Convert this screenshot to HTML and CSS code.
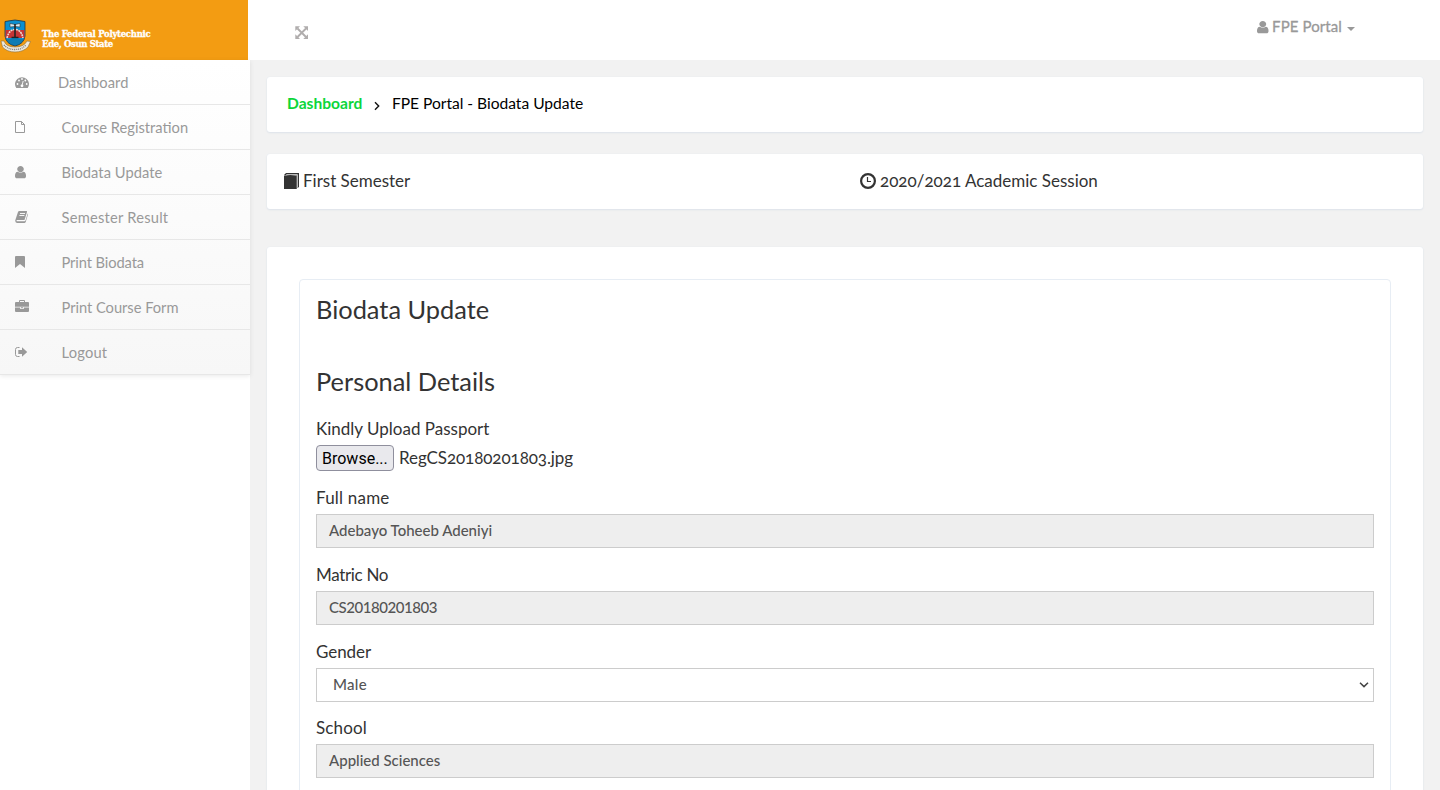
FILE: index.html
```html
<!DOCTYPE html>
<html lang="en">
<head>
<meta charset="utf-8">
<title>FPE Portal - Biodata Update</title>
<link rel="stylesheet" href="styles.css">
</head>
<body>
<div class="layout">
  <aside class="sidebar">
    <a class="brand">
      <svg class="crest" width="32" height="34" viewBox="0 0 32 34">
        <path d="M5 2.500 Q15 -.5 25 2.500 V17 Q24 25 15 27 Q6 25 5 17Z" fill="#0b8fd0" stroke="#26333c" stroke-width=".8"/>
        <path d="M5.500 11 H24.500 V19 H5.500Z" fill="#c73535"/>
        <path d="M7 19 Q9 10.500 15 10.500 Q21 10.500 23 19" fill="none" stroke="#eddcd2" stroke-width="1.600" stroke-dasharray="2 .7"/>
        <path d="M10 4.500 L15 5.500 L20 4.500 V8 L15 7.500 L10 8Z" fill="#dcecf2" stroke="#333" stroke-width=".6"/>
        <path d="M15 5 V19 M11.500 18.500 H18.500" stroke="#222" stroke-width="1.600"/>
        <path d="M7 21 H23 M8 23 H22 M10 25 H20" stroke="#126792" stroke-width=".9"/>
        <path d="M1 22 L4 22 Q6 28 15 28 Q24 28 27 22 L30.500 22.500 L28 28 Q23 33 15 33 Q7 33 2.500 28Z" fill="#eee9dc" stroke="#8b713f" stroke-width=".6"/>
        <path d="M4 26 Q8 30.500 15 30.500 Q22 30.500 26 26" fill="none" stroke="#777" stroke-width="1.300" stroke-dasharray="1 .9"/>
      </svg>
      <span class="brand-name"><span class="b1">The Federal Polytechnic</span><br><span class="b2">Ede, Osun State</span></span>
    </a>
    <nav class="menu">
      <a class="item first"><svg width="16" height="14" viewBox="0 0 16 14"><path d="M1.300 13 A7 6.800 0 1 1 12.700 13Z" fill="currentColor"/><g fill="#fff"><circle cx="2.500" cy="9" r=".9"/><circle cx="4" cy="5.500" r=".9"/><circle cx="7" cy="4" r=".9"/><circle cx="10.300" cy="5.500" r=".9"/><circle cx="11.700" cy="9" r=".9"/><circle cx="7" cy="10.800" r="1.400"/></g><path d="M7 10.500 L8.200 6" stroke="#fff" stroke-width=".9"/></svg><span class="m1">Dashboard</span></a>
      <a class="item"><svg width="16" height="14" viewBox="0 0 16 14"><path d="M.5 1.500 H6.500 L9.500 4.500 V12.500 H.5Z M6.500 1.500 V4.500 H9.500" fill="none" stroke="currentColor"/></svg><span class="m2">Course Registration</span></a>
      <a class="item"><svg width="16" height="14" viewBox="0 0 16 14"><path fill="currentColor" transform="scale(.0086 .0080)" d="M1280 1399q0 109-62.500 187t-150.500 78h-854q-88 0-150.500-78t-62.500-187q0-85 8.500-160.500t31.500-152 58.500-131 94-89 134.500-34.500q131 128 313 128t313-128q76 0 134.500 34.500t94 89 58.500 131 31.500 152 8.500 160.500zm-256-887q0 159-112.500 271.500t-271.500 112.500-271.500-112.500-112.500-271.500 112.500-271.500 271.500-112.500 271.500 112.500 112.500 271.500z"/></svg><span class="m3">Biodata Update</span></a>
      <a class="item"><svg width="16" height="14" viewBox="0 0 16 14"><path d="M4.300 1 H11.500 Q12.300 1.200 12 2 L9.500 10 H2 Q1 10.300 1.700 11.200 H9.500 Q10.300 11.200 10.600 10.300 L12.700 3.500 Q13.200 4 12.900 4.700 L10.800 11.800 Q10.300 13 9.300 13 H2 Q.2 12.500 .2 10.500 L2.900 2.200 Q3.300 1 4.300 1Z" fill="currentColor"/><path d="M5 3.500 H10 M4.400 5.500 H9.400" stroke="#fff" stroke-width=".9"/></svg><span class="m4">Semester Result</span></a>
      <a class="item"><svg width="16" height="14" viewBox="0 0 16 14"><path d="M1 1 H9 Q10 1 10 2 V13 L5 9 L0 13 V2 Q0 1 1 1Z" fill="currentColor"/></svg><span class="m5">Print Biodata</span></a>
      <a class="item"><svg width="16" height="14" viewBox="0 0 16 14"><path d="M4.500 2.500 V.5 H9.500 V2.500" fill="none" stroke="currentColor"/><path d="M1 2 H13 Q14 2 14 3 V6.700 H0 V3 Q0 2 1 2Z M0 7.500 H5.200 V9 H8.800 V7.500 H14 V11 Q14 12 13 12 H1 Q0 12 0 11Z M6 7.300 H8 V8.300 H6Z" fill="currentColor"/></svg><span class="m6">Print Course Form</span></a>
      <a class="item"><svg width="16" height="14" viewBox="0 0 16 14"><path d="M4.500 2.500 H2.500 Q.5 2.500 .5 4.500 V9.500 Q.5 11.500 2.500 11.500 H4.500" fill="none" stroke="currentColor"/><path d="M3.300 5 H7 V2.300 L12.200 7 L7 11.700 V9 H3.300Z" fill="currentColor"/></svg><span class="m7">Logout</span></a>
    </nav>
  </aside>
  <div class="content">
    <header class="topbar">
      <svg class="expand" width="14" height="14" viewBox="0 0 14 14"><path d="M2.500 2.500 L11 11 M11 2.500 L2.500 11" stroke="currentColor" stroke-width="1.900"/><path d="M.3 .3 H5 L.3 5Z M13 .3 V5 L8.300 .3Z M.3 13 V8.300 L5 13Z M13 13 H8.300 L13 8.300Z" fill="currentColor"/></svg>
      <a class="account"><svg width="12" height="14" viewBox="0 0 12 14"><path fill="currentColor" transform="scale(.0090 .0080)" d="M1280 1399q0 109-62.500 187t-150.500 78h-854q-88 0-150.500-78t-62.500-187q0-85 8.500-160.500t31.500-152 58.500-131 94-89 134.500-34.500q131 128 313 128t313-128q76 0 134.500 34.500t94 89 58.500 131 31.500 152 8.500 160.500zm-256-887q0 159-112.500 271.500t-271.500 112.500-271.500-112.500-112.500-271.500 112.500-271.500 271.500-112.500 271.500 112.500 112.500 271.500z"/></svg><span class="account-name">FPE Portal</span><i class="caret"></i></a>
    </header>
    <main class="page">
      <section class="card crumbs">
        <a class="c1">Dashboard</a>
        <svg width="6" height="10" viewBox="0 0 6 10"><path d="M1 1.200 L4.700 5 L1 8.800" fill="none" stroke="#111" stroke-width="1.400"/></svg>
        <span class="c2">FPE Portal - Biodata Update</span>
      </section>
      <section class="card term">
        <div class="half"><svg width="16" height="16" viewBox="0 0 16 16"><path d="M0 2 L2 0 H15 V14 L13.500 15 V2.500 H1 V16 H12.500 V3" fill="#333"/><path d="M1 3 H12.500 V16 H0 V2Z" fill="#333"/><path d="M2 2 L3 1.500 H13.500 V14" fill="none" stroke="#bbb" stroke-width="1"/></svg><span class="s1">First Semester</span></div>
        <div class="half"><svg class="clock" width="16" height="16" viewBox="0 0 16 16"><circle cx="8" cy="8" r="6.900" fill="none" stroke="#333" stroke-width="2.200"/><path d="M7.500 4 V8.500 H11" fill="none" stroke="#333" stroke-width="1.200"/></svg><span class="s2">2020/2021 Academic Session</span></div>
      </section>
      <section class="card form-card">
        <form class="panel">
          <h3>Biodata Update</h3>
          <h3 class="second">Personal Details</h3>
          <div class="group upload">
            <label>Kindly Upload Passport</label>
            <div class="file"><span class="browse">Browse...</span><span class="filename">RegCS20180201803.jpg</span></div>
          </div>
          <div class="group"><label class="l2">Full name</label><div class="control"><span class="v1">Adebayo Toheeb Adeniyi</span></div></div>
          <div class="group"><label class="l3">Matric No</label><div class="control"><span class="v2">CS20180201803</span></div></div>
          <div class="group"><label class="l4">Gender</label><div class="control select"><span class="v3">Male</span><svg width="10" height="6" viewBox="0 0 10 6"><path d="M1 .8 L5 4.600 L9 .8" fill="none" stroke="#444" stroke-width="1.500"/></svg></div></div>
          <div class="group"><label class="l5">School</label><div class="control"><span class="v4">Applied Sciences</span></div></div>
        </form>
      </section>
    </main>
  </div>
</div>
</body>
</html>
```
FILE: styles.css
```css
* { box-sizing: border-box; }
body { margin: 0; background: #f2f2f2; color: #333; font: 17px/24px Lato, "Open Sans", sans-serif; }
span { white-space: nowrap; }
.layout { display: flex; height: 790px; overflow: hidden; }
.sidebar { width: 250px; flex: none; background: #fff; }
.brand { display: flex; align-items: flex-start; width: 248px; height: 60px; padding-top: 19px; background: #f39c12; color: #fff; }
.crest { flex: none; margin-left: -.5px; }
.brand-name { margin: 10px 0 0 10.5px; font: 900 8.5px/10px "DejaVu Serif", serif; -webkit-text-stroke: .3px #fff; }
.b1 { letter-spacing: -.27px; }
.b2 { letter-spacing: -.35px; }
.menu { color: #999; background: linear-gradient(#fff, #f7f7f7); box-shadow: 0 1px 5px rgba(0,0,0,.09); font-size: 14.7px; }
.item { display: flex; align-items: center; height: 45px; padding-left: 15px; border-bottom: 1px solid #e7e7e7; }
.item svg { flex: none; margin-right: 30.5px; }
.item.first svg { margin-right: 27px; }
.m1, .m3 { letter-spacing: .05px; }
.m4 { letter-spacing: .23px; }
.m5 { letter-spacing: -.1px; }
.m6 { letter-spacing: -.03px; }
.m7 { letter-spacing: .2px; }
.content { flex: 1; min-width: 0; }
.topbar { display: flex; justify-content: space-between; height: 60px; padding: 26px 85px 0 45px; background: #fff; color: #999; }
.expand { color: #b0adad; }
.account { display: flex; align-items: center; height: 14px; margin-top: -6px; font-size: 15px; -webkit-text-stroke: .3px #999; }
.account svg { margin-right: 3px; }
.account-name { padding-bottom: 2px; letter-spacing: .1px; }
.caret { margin: 4px 0 0 5px; border: 4px solid transparent; border-top-color: #999; border-bottom: 0; }
.page { padding: 17px 17px 0; }
.card { background: #fff; border-radius: 3px; box-shadow: 0 0 1px #dbe4ef, 0 1px 2px #dde2e8; }
.crumbs { display: flex; align-items: center; height: 55px; padding: 0 20px 4px; color: #000; font-size: 15.6px; }
.crumbs a { color: #0cd63b; font-weight: 700; }
.crumbs svg { margin: 6px 12px 0 11.5px; }
.c2 { letter-spacing: -.02px; }
.term { display: flex; height: 55px; margin-top: 22px; }
.half { display: flex; align-items: center; width: 576px; padding: 0 0 2px 17px; }
.half svg { margin: 0 3px 0 0; }
.half .clock { margin-right: 4px; }
.s2, .filename { font-feature-settings: "onum"; }
.form-card { margin-top: 38px; padding: 32px; height: 700px; }
.panel { height: 700px; padding: 15px 16px; border: 1px solid #e7edf4; border-radius: 4px; }
h3 { margin: 0; font-size: 25.4px; line-height: 28px; font-weight: 400; }
.second { margin-top: 44px; }
.upload { margin-top: 22px; height: 69px; }
label { display: block; height: 28px; line-height: 24px; }
.l2 { letter-spacing: .2px; }
.l3 { letter-spacing: -.33px; }
.l4 { letter-spacing: -.08px; }
.l5 { letter-spacing: .16px; }
.l3, .l4 { line-height: 23px; }
.file { display: flex; align-items: center; height: 26px; }
.browse { display: flex; align-items: center; width: 78px; height: 26px; margin-right: 5px; padding: 1px 0 0 5px; border: 1px solid #8f8f9d; border-radius: 4px; background: #e9e9ed; color: #000; font-family: Roboto, sans-serif; font-size: 16px; }
.filename { letter-spacing: -.09px; }
.group + .group { height: 76.8px; }
.control { display: flex; align-items: center; height: 34px; padding: 0 12px 2px; border: 1px solid #ccc; background: #eee; color: #555; font-size: 15px; font-weight: 500; }
.select { justify-content: space-between; padding: 0 4px 2px 16px; background: #fff; }
.select svg { margin-top: 2px; }
.v2 { letter-spacing: -.45px; }
.v3 { letter-spacing: .3px; }
```
